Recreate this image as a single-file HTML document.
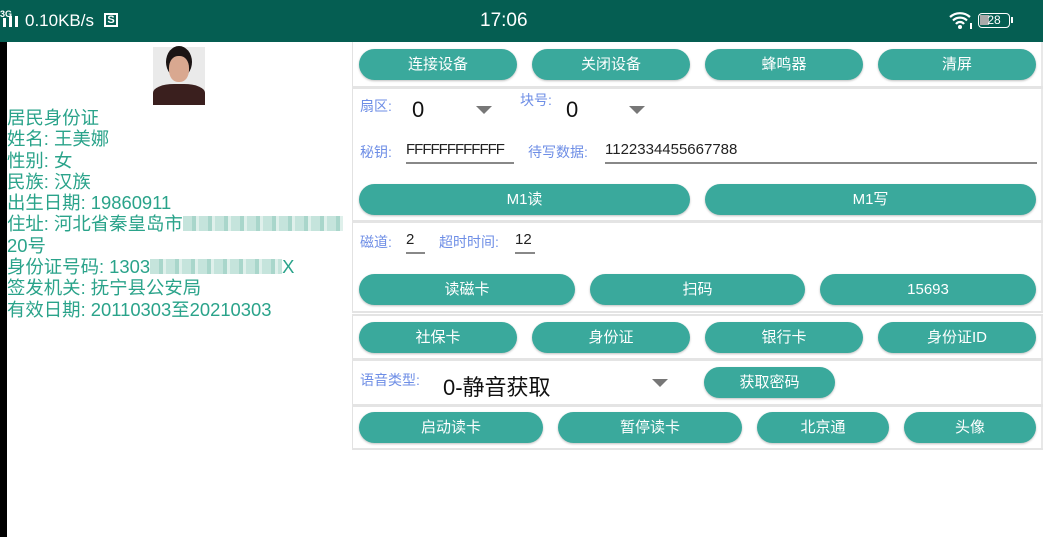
<!DOCTYPE html>
<html><head><meta charset="utf-8"><style>
*{margin:0;padding:0;box-sizing:border-box}
body{width:1043px;height:537px;overflow:hidden;background:#fff;position:relative;font-family:"Liberation Sans","Noto Sans CJK SC",sans-serif}
.a{position:absolute}
.sb{left:0;top:0;width:1043px;height:42px;background:#055e52;color:#fff}
.btn{position:absolute;height:31px;border-radius:16px;background:#3aa99c;color:#fff;font-size:15px;line-height:31px;text-align:center;box-shadow:0 1px 2px rgba(0,0,0,.25)}
.hl{position:absolute;left:352px;width:691px;height:3px;background:#e4e4e4}
.info{left:7px;top:107px;color:#2aa38a;font-size:18.4px;line-height:21.3px;white-space:nowrap}
.lbl{position:absolute;color:#6e8ee6;font-size:14px}
.tri{position:absolute;width:0;height:0;border-left:8px solid transparent;border-right:8px solid transparent;border-top:8px solid #777}
.big{position:absolute;font-size:22px;color:#111}
.in{position:absolute;font-size:15px;color:#222;border-bottom:2px solid #888;height:23px}
.bl{display:inline-block;height:15px;vertical-align:-1px;background:repeating-linear-gradient(90deg,#c5e4dc 0 9px,#a9d6cb 9px 13px,#dff0eb 13px 16px)}
</style></head><body>
<div class="a" style="left:0;top:0;width:7px;height:537px;background:#000"></div>
<div class="a sb">
<div class="a" style="left:0;top:9px;font-size:9px;font-weight:bold">3G</div>
<div class="a" style="left:3px;top:18px;width:3px;height:9px;background:#fff"></div>
<div class="a" style="left:9px;top:16px;width:3px;height:11px;background:#fff"></div>
<div class="a" style="left:15px;top:16px;width:3px;height:11px;background:#fff"></div>
<div class="a" style="left:25px;top:11px;font-size:17px">0.10KB/s</div>
<div class="a" style="left:104px;top:13px;width:14px;height:14px;border:2px solid #fff;font-size:11px;line-height:10px;text-align:center;font-weight:bold">S</div>
<div class="a" style="left:480px;top:10px;font-size:19px">17:06</div>
<svg class="a" style="left:948px;top:11px" width="26" height="20" viewBox="0 0 26 20"><path d="M2 6a15 15 0 0 1 20 0M5 9.5a10 10 0 0 1 14 0M8 13a5 5 0 0 1 8 0" stroke="#fff" stroke-width="2.2" fill="none"/><circle cx="12" cy="16" r="2" fill="#fff"/><rect x="22" y="12" width="2" height="6" fill="#fff"/></svg>
<div class="a" style="left:978px;top:13px;width:32px;height:15px;border:1.5px solid #fff;border-radius:4px;font-size:12px;line-height:12px;text-align:center"><div class="a" style="left:1px;top:1px;width:9px;height:10px;background:#aaa"></div><span style="position:relative">28</span></div>
<div class="a" style="left:1011px;top:17px;width:2px;height:6px;background:#fff"></div>
</div>
<div class="a" style="left:153px;top:44px;width:52px;height:61px;background:linear-gradient(#fff 0,#fff 5%,#eaeaea 5%);overflow:hidden">
<div class="a" style="left:13px;top:2px;width:26px;height:32px;border-radius:50%;background:#1b1414"></div>
<div class="a" style="left:16px;top:12px;width:20px;height:26px;border-radius:45%;background:#d9a890"></div>
<div class="a" style="left:0;top:40px;width:52px;height:22px;border-radius:40% 40% 0 0;background:#3a1f1e"></div>
</div>
<div class="a info">居民身份证<br>姓名: 王美娜<br>性别: 女<br>民族: 汉族<br>出生日期: 19860911<br>住址: 河北省秦皇岛市<span class="bl" style="width:160px"></span><br>20号<br>身份证号码: 1303<span class="bl" style="width:132px"></span>X<br>签发机关: 抚宁县公安局<br>有效日期: 20110303至20210303</div>
<div class="a" style="left:352px;top:42px;width:1px;height:408px;background:#e2e2e2"></div>
<div class="a" style="left:1041px;top:42px;width:2px;height:408px;background:#e8e8e8"></div>
<div class="btn" style="left:359px;top:49px;width:158px">连接设备</div>
<div class="btn" style="left:532px;top:49px;width:158px">关闭设备</div>
<div class="btn" style="left:705px;top:49px;width:158px">蜂鸣器</div>
<div class="btn" style="left:878px;top:49px;width:158px">清屏</div>
<div class="hl" style="top:86px"></div>
<div class="lbl" style="left:360px;top:96px">扇区:</div>
<div class="big" style="left:412px;top:97px">0</div>
<div class="tri" style="left:476px;top:106px"></div>
<div class="lbl" style="left:520px;top:90px">块号:</div>
<div class="big" style="left:566px;top:97px">0</div>
<div class="tri" style="left:629px;top:106px"></div>
<div class="lbl" style="left:360px;top:142px">秘钥:</div>
<div class="in" style="left:406px;top:141px;width:108px;overflow:hidden;letter-spacing:-1px">FFFFFFFFFFFF</div>
<div class="lbl" style="left:528px;top:142px">待写数据:</div>
<div class="in" style="left:605px;top:141px;width:432px">1122334455667788</div>
<div class="btn" style="left:359px;top:184px;width:331px">M1读</div>
<div class="btn" style="left:705px;top:184px;width:331px">M1写</div>
<div class="hl" style="top:220px"></div>
<div class="lbl" style="left:360px;top:232px">磁道:</div>
<div class="in" style="left:406px;top:231px;width:19px">2</div>
<div class="lbl" style="left:439px;top:232px">超时时间:</div>
<div class="in" style="left:515px;top:231px;width:20px">12</div>
<div class="btn" style="left:359px;top:274px;width:216px">读磁卡</div>
<div class="btn" style="left:590px;top:274px;width:215px">扫码</div>
<div class="btn" style="left:820px;top:274px;width:216px">15693</div>
<div class="hl" style="top:311px;height:5px;background:linear-gradient(#e4e4e4 0,#e4e4e4 40%,#fff 40%,#fff 60%,#e4e4e4 60%)"></div>
<div class="btn" style="left:359px;top:322px;width:158px">社保卡</div>
<div class="btn" style="left:532px;top:322px;width:158px">身份证</div>
<div class="btn" style="left:705px;top:322px;width:158px">银行卡</div>
<div class="btn" style="left:878px;top:322px;width:158px">身份证ID</div>
<div class="hl" style="top:358px"></div>
<div class="lbl" style="left:360px;top:370px">语音类型:</div>
<div class="big" style="left:443px;top:370px">0-静音获取</div>
<div class="tri" style="left:652px;top:379px"></div>
<div class="btn" style="left:704px;top:367px;width:131px">获取密码</div>
<div class="hl" style="top:404px"></div>
<div class="btn" style="left:359px;top:412px;width:184px">启动读卡</div>
<div class="btn" style="left:558px;top:412px;width:184px">暂停读卡</div>
<div class="btn" style="left:757px;top:412px;width:132px">北京通</div>
<div class="btn" style="left:904px;top:412px;width:132px">头像</div>
<div class="hl" style="top:448px;height:2px"></div>
</body></html>
